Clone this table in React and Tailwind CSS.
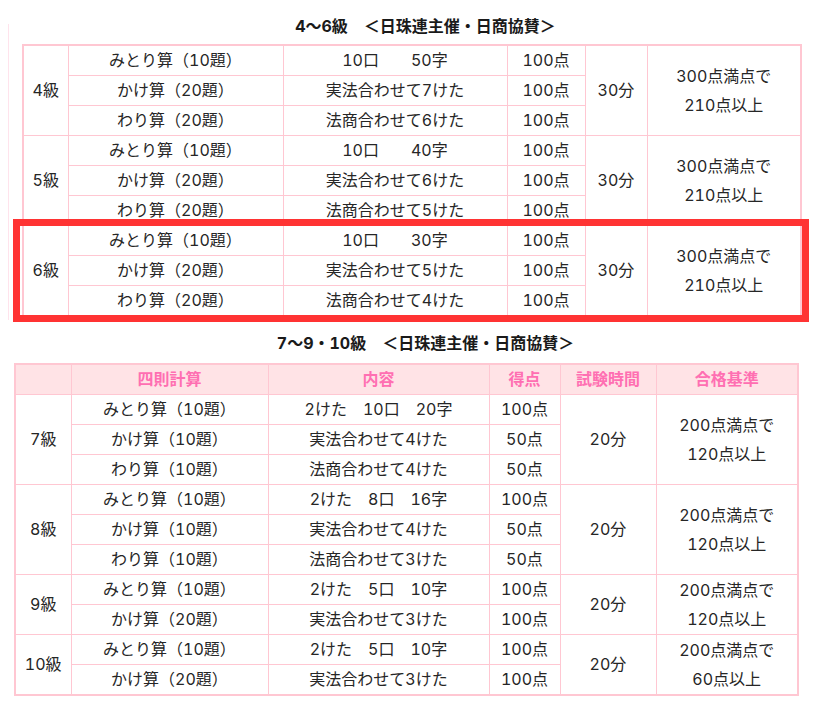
import React from "react";

const FONT = { fontFamily: '"Inter", "Noto Sans CJK JP", sans-serif' };

const td =
  "border border-[#ffc7d2] h-[30px] p-0 text-center align-middle leading-[29px] whitespace-nowrap";

const top = [
  {
    g: "4級",
    rows: [
      ["みとり算（10題）", "10口　　50字", "100点"],
      ["かけ算（20題）", "実法合わせて7けた", "100点"],
      ["わり算（20題）", "法商合わせて6けた", "100点"],
    ],
    t: "30分",
    p: ["300点満点で", "210点以上"],
  },
  {
    g: "5級",
    rows: [
      ["みとり算（10題）", "10口　　40字", "100点"],
      ["かけ算（20題）", "実法合わせて6けた", "100点"],
      ["わり算（20題）", "法商合わせて5けた", "100点"],
    ],
    t: "30分",
    p: ["300点満点で", "210点以上"],
  },
  {
    g: "6級",
    rows: [
      ["みとり算（10題）", "10口　　30字", "100点"],
      ["かけ算（20題）", "実法合わせて5けた", "100点"],
      ["わり算（20題）", "法商合わせて4けた", "100点"],
    ],
    t: "30分",
    p: ["300点満点で", "210点以上"],
  },
];

const bottom = [
  {
    g: "7級",
    rows: [
      ["みとり算（10題）", "2けた　10口　20字", "100点"],
      ["かけ算（10題）", "実法合わせて4けた", "50点"],
      ["わり算（10題）", "法商合わせて4けた", "50点"],
    ],
    t: "20分",
    p: ["200点満点で", "120点以上"],
  },
  {
    g: "8級",
    rows: [
      ["みとり算（10題）", "2けた　8口　16字", "100点"],
      ["かけ算（10題）", "実法合わせて4けた", "50点"],
      ["わり算（10題）", "法商合わせて3けた", "50点"],
    ],
    t: "20分",
    p: ["200点満点で", "120点以上"],
  },
  {
    g: "9級",
    rows: [
      ["みとり算（10題）", "2けた　5口　10字", "100点"],
      ["かけ算（20題）", "実法合わせて3けた", "100点"],
    ],
    t: "20分",
    p: ["200点満点で", "120点以上"],
  },
  {
    g: "10級",
    rows: [
      ["みとり算（10題）", "2けた　5口　10字", "100点"],
      ["かけ算（20題）", "実法合わせて3けた", "100点"],
    ],
    t: "20分",
    p: ["200点満点で", "60点以上"],
  },
];

function Body({ groups }) {
  return (
    <tbody>
      {groups.map((grp) =>
        grp.rows.map((r, i) => (
          <tr key={grp.g + i}>
            {i === 0 && (
              <td className={td} rowSpan={grp.rows.length}>
                {grp.g}
              </td>
            )}
            <td className={td}>{r[0]}</td>
            <td className={td}>{r[1]}</td>
            <td className={td}>{r[2]}</td>
            {i === 0 && (
              <td className={td} rowSpan={grp.rows.length}>
                {grp.t}
              </td>
            )}
            {i === 0 && (
              <td className={td} rowSpan={grp.rows.length}>
                {grp.p[0]}
                <br />
                {grp.p[1]}
              </td>
            )}
          </tr>
        ))
      )}
    </tbody>
  );
}

export default function App() {
  const th =
    "border border-[#ffc7d2] h-[30px] p-0 text-center align-middle leading-[29px] font-bold text-[#ff6fb2] bg-[#ffe3e6]";
  return (
    <div
      className="relative w-[839px] h-[705px] bg-white text-[16px] text-[#262626] tabular-nums"
      style={FONT}
    >
      <h2 className="pt-[17px] h-[36px] leading-[19px] text-center font-bold text-[16px] text-[#1a1a1a] pl-[12px]">
        4〜6級　＜日珠連主催・日商協賛＞
      </h2>
      <div className="-mt-[12px] ml-[8px] border-l border-[#ffe3ec] pt-[20px] pb-[3px] pl-[13px]">
        <table className="border-collapse table-fixed w-[778px] border-2 border-[#ffc7d2]">
          <colgroup>
            <col className="w-[45px]" />
            <col className="w-[215px]" />
            <col className="w-[224px]" />
            <col className="w-[78px]" />
            <col className="w-[62px]" />
            <col className="w-[154px]" />
          </colgroup>
          <Body groups={top} />
        </table>
      </div>

      <h2 className="pt-[14px] h-[33px] leading-[19px] text-center font-bold text-[16px] text-[#1a1a1a] pl-[12px] mb-[10px]">
        7〜9・10級　＜日珠連主催・日商協賛＞
      </h2>
      <div className="ml-[14px]">
        <table className="border-collapse table-fixed w-[783px] border-2 border-[#ffc7d2]">
          <colgroup>
            <col className="w-[56px]" />
            <col className="w-[197px]" />
            <col className="w-[221px]" />
            <col className="w-[71px]" />
            <col className="w-[96px]" />
            <col className="w-[142px]" />
          </colgroup>
          <thead>
            <tr>
              <th className={th}></th>
              <th className={th}>四則計算</th>
              <th className={th}>内容</th>
              <th className={th}>得点</th>
              <th className={th}>試験時間</th>
              <th className={th}>合格基準</th>
            </tr>
          </thead>
          <Body groups={bottom} />
        </table>
      </div>

      <div className="absolute left-[13px] top-[219px] w-[796px] h-[103px] border-[7px] border-[#ff3333] pointer-events-none" />
    </div>
  );
}
